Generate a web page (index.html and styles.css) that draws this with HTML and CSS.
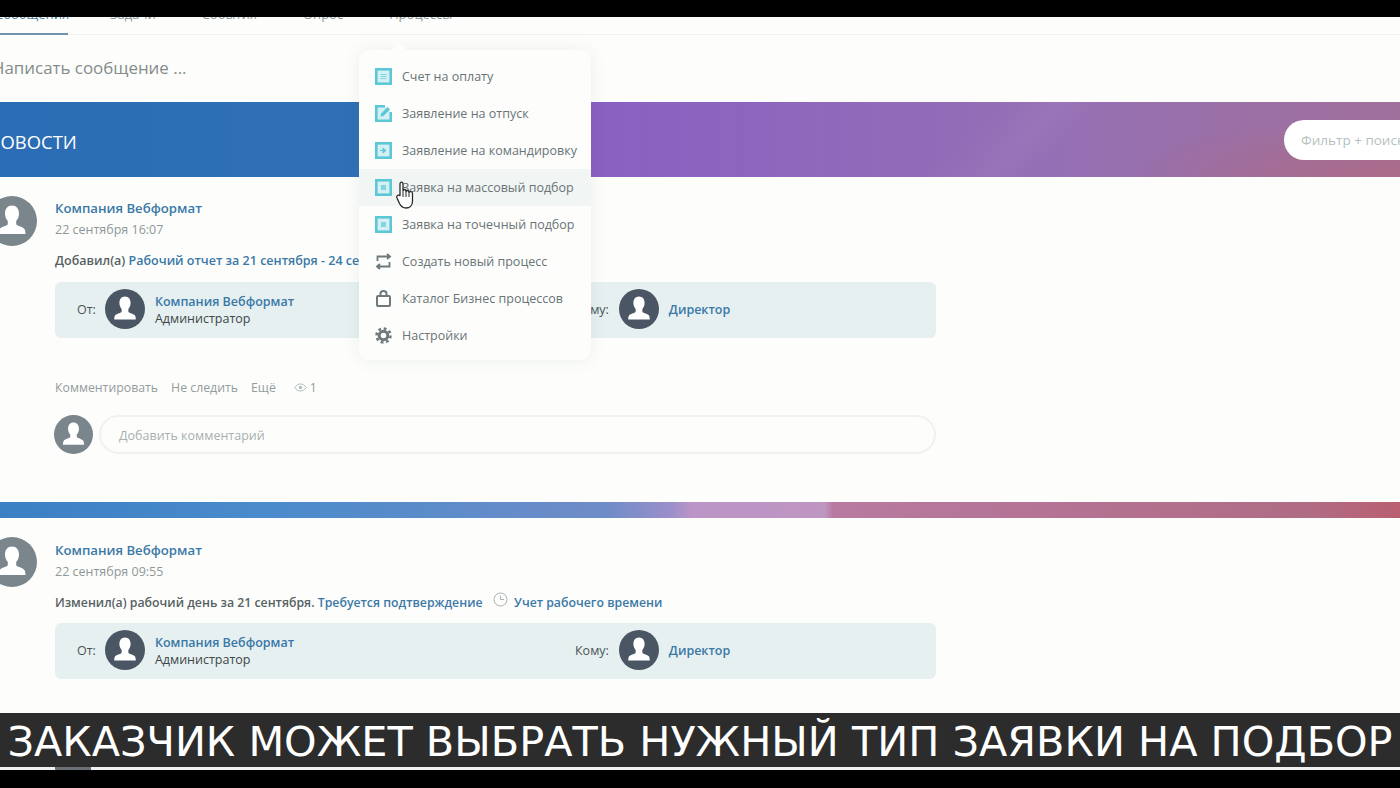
FILE: index.html
```html
<!DOCTYPE html>
<html lang="ru">
<head>
    <meta charset="UTF-8">
    <meta name="viewport" content="width=device-width, initial-scale=1.0">
    <title>Новости</title>
    <link rel="stylesheet" href="styles.css">
</head>
<body>

<svg class="defs" width="0" height="0">
    <symbol id="person" viewBox="0 0 50 50">
        <path d="M25 9.500c-4.500 0-7 3.500-7 8 0 3.200 1.200 5.500 2.800 7.500v3c0 1.800-5.300 2.200-7.800 4.500-1 1-1.500 3-1.500 5.500h27c0-2.500-.5-4.500-1.500-5.500-2.500-2.300-7.800-2.700-7.800-4.500v-3c1.600-2 2.800-4.300 2.800-7.500 0-4.500-2.500-8-7-8z" fill="#fff"/>
    </symbol>
    <symbol id="doc" viewBox="0 0 17 17">
        <rect x="1.300" y="1.300" width="14.400" height="14.400" fill="#d4f0f4" stroke="#5cc8d6" stroke-width="2.600"/>
        <rect x="6" y="6" width="5" height="5" fill="#7fd5e0"/>
    </symbol>
    <symbol id="doc-lines" viewBox="0 0 17 17">
        <rect x="1.300" y="1.300" width="14.400" height="14.400" fill="#d4f0f4" stroke="#5cc8d6" stroke-width="2.600"/>
        <path d="M5.500 6.500h6M5.500 8.500h6M5.500 10.500h6" stroke="#7fd5e0"/>
    </symbol>
    <symbol id="doc-arrow" viewBox="0 0 17 17">
        <rect x="1.300" y="1.300" width="14.400" height="14.400" fill="#d4f0f4" stroke="#5cc8d6" stroke-width="2.600"/>
        <path d="M5 8.500h4M8 6l3 2.500L8 11z" fill="#5cc8d6" stroke="#5cc8d6"/>
    </symbol>
</svg>

<div class="black-top"></div>

<main class="page">
    <nav class="tabs">
        <a class="tab active">Сообщения</a>
        <a class="tab">Задачи</a>
        <a class="tab">События</a>
        <a class="tab">Опрос</a>
        <a class="tab">Процессы</a>
    </nav>

    <div class="write">Написать сообщение ...</div>

    <div class="banner">
        <h1>НОВОСТИ</h1>
        <div class="filter">Фильтр + поиск</div>
    </div>

    <!-- First post -->
    <article class="post">
        <div class="avatar big"><svg><use href="#person"/></svg></div>
        <div class="post-body">
            <a class="author">Компания Вебформат</a>
            <div class="date">22 сентября 16:07</div>
            <p class="action">Добавил(а) <a>Рабочий отчет за 21 сентября - 24 сентября</a></p>
            <div class="route">
                <div class="party">
                    <span class="label">От:</span>
                    <div class="avatar dark"><svg><use href="#person"/></svg></div>
                    <div class="who"><a>Компания Вебформат</a><span>Администратор</span></div>
                </div>
                <div class="party">
                    <span class="label">Кому:</span>
                    <div class="avatar dark"><svg><use href="#person"/></svg></div>
                    <div class="who"><a>Директор</a></div>
                </div>
            </div>
            <div class="links">
                <span>Комментировать</span>
                <span>Не следить</span>
                <span>Ещё</span>
                <span class="views">
                    <svg width="13" height="9" viewBox="0 0 13 9"><path d="M.8 4.500C2.500 2 4.300 1 6.500 1s4 1 5.700 3.500C10.500 7 8.700 8 6.500 8S2.500 7 .8 4.500z" fill="none" stroke="#b4bcbc"/><circle cx="6.500" cy="4.500" r="1.700" fill="#b4bcbc"/></svg>
                    1
                </span>
            </div>
            <div class="comment">
                <div class="avatar small"><svg><use href="#person"/></svg></div>
                <div class="comment-input">Добавить комментарий</div>
            </div>
        </div>
    </article>

    <div class="band"></div>

    <!-- Second post -->
    <article class="post next">
        <div class="avatar big"><svg><use href="#person"/></svg></div>
        <div class="post-body">
            <a class="author">Компания Вебформат</a>
            <div class="date">22 сентября 09:55</div>
            <p class="action tight">
                Изменил(а) рабочий день за 21 сентября. <a>Требуется подтверждение</a>
                <svg class="clock" width="15" height="15" viewBox="0 0 15 15"><circle cx="7.500" cy="7.500" r="6.500" fill="none" stroke="#a9b4b4"/><path d="M7.500 3.500v4h3.500" fill="none" stroke="#a9b4b4"/></svg>
                <a>Учет рабочего времени</a>
            </p>
            <div class="route">
                <div class="party">
                    <span class="label">От:</span>
                    <div class="avatar dark"><svg><use href="#person"/></svg></div>
                    <div class="who"><a>Компания Вебформат</a><span>Администратор</span></div>
                </div>
                <div class="party">
                    <span class="label">Кому:</span>
                    <div class="avatar dark"><svg><use href="#person"/></svg></div>
                    <div class="who"><a>Директор</a></div>
                </div>
            </div>
        </div>
    </article>
</main>

<!-- Dropdown menu -->
<div class="menu">
    <div class="menu-item">
        <svg width="17" height="17"><use href="#doc-lines"/></svg>Счет на оплату
    </div>
    <div class="menu-item">
        <svg width="17" height="17" viewBox="0 0 17 17"><path d="M10 1.300H1.300v14.400h14.400V7" fill="#d4f0f4" stroke="#5cc8d6" stroke-width="2.600"/><path d="M5.500 11.500l.6-3L12.500 2l2.500 2.500-6.500 6.400z" fill="#5cc8d6"/></svg>Заявление на отпуск
    </div>
    <div class="menu-item">
        <svg width="17" height="17"><use href="#doc-arrow"/></svg>Заявление на командировку
    </div>
    <div class="menu-item hover">
        <svg width="17" height="17"><use href="#doc"/></svg>Заявка на массовый подбор
    </div>
    <div class="menu-item">
        <svg width="17" height="17"><use href="#doc"/></svg>Заявка на точечный подбор
    </div>
    <div class="menu-item">
        <svg width="17" height="17" viewBox="0 0 17 17" fill="none" stroke="#6f787a" stroke-width="1.800"><path d="M2.500 8V3.500H14M12 1l3 2.500L12 6"/><path d="M14.500 9v4.500H3M5 11l-3 2.500L5 16"/></svg>Создать новый процесс
    </div>
    <div class="menu-item">
        <svg width="17" height="17" viewBox="0 0 17 17" fill="none" stroke="#6f787a" stroke-width="2"><rect x="2" y="6" width="13" height="10" rx="1"/><path d="M5.500 6V3.500C5.500 2 6.800 1 8.500 1s3 1 3 2.500V6"/></svg>Каталог Бизнес процессов
    </div>
    <div class="menu-item">
        <svg width="17" height="17" viewBox="0 0 17 17"><circle cx="8.500" cy="8.500" r="4.300" fill="none" stroke="#6f787a" stroke-width="3"/><circle cx="8.500" cy="8.500" r="7" fill="none" stroke="#6f787a" stroke-width="2.500" stroke-dasharray="2.800 2.700"/></svg>Настройки
    </div>
</div>

<!-- Mouse pointer -->
<svg class="pointer" width="18" height="28" viewBox="0 0 18 28">
    <path d="M4 13V3c0-2.500 3-2.500 3 0v7c0-2 3-2 3 0v1c0-2 3-2 3 0v1c0-2 3.500-2 3.500 .5V20c0 4-2.500 7-6.500 7-3.500 0-5-1.500-6.500-4.500L1 17c-1-2.500 2-4 3-2z" fill="#fff" stroke="#26292c" stroke-width="1.300"/>
    <path d="M7 10v6M10 11v5M13 12v4" stroke="#26292c" fill="none"/>
</svg>

<div class="caption">ЗАКАЗЧИК МОЖЕТ ВЫБРАТЬ НУЖНЫЙ ТИП ЗАЯВКИ НА ПОДБОР</div>
<div class="peek"><span></span></div>
<div class="black-bottom"></div>

</body>
</html>
```

FILE: styles.css
```css
body {
    font-family: "Open Sans", "Liberation Sans", sans-serif;
    font-size: 13px;
    margin: 0;
    height: 788px;
    overflow: hidden;
    background-color: #fdfefb;
    color: #4b5557;
}
a {
    color: #3a78a8;
}
.defs {
    position: absolute;
}
.black-top {
    height: 17px;
    background-color: #000;
    position: relative;
    z-index: 2;
}
.black-bottom {
    height: 18px;
    background-color: #000;
}
.page {
    height: 696px;
    width: 1520px;
    margin-left: -13px;
    overflow: hidden;
}
.tabs {
    display: flex;
    gap: 46px;
    margin-top: -16px;
    height: 34px;
    border-bottom: 1px solid #edf1f0;
    box-sizing: border-box;
}
.tab {
    color: #8b9699;
    line-height: 26px;
}
.tab.active {
    width: 81px;
    padding-left: 8px;
    margin-right: -4px;
    border-bottom: 2px solid #6f94ad;
    height: 34px;
    box-sizing: border-box;
    color: #4e7f9f;
}
.write {
    font-size: 16.900px;
    color: #858c8c;
    padding-left: 5px;
    line-height: 20px;
    margin-top: 23px;
    margin-bottom: 24px;
}
.banner {
    height: 75px;
    display: flex;
    align-items: center;
    justify-content: space-between;
    background: radial-gradient(ellipse 260px 60px at 1400px 75px, rgba(180, 105, 125, 0.6), transparent), linear-gradient(135deg, transparent 715px, rgba(255,255,255,0.04) 760px, transparent 790px), linear-gradient(90deg, #2a6db4 0, #2f6fb5 370px, #8a60c2 610px, #9570b4 1080px, #9b70a6 1250px, #a0709c 1420px);
}
.banner h1 {
    margin: 3px 0 0;
    font-size: 18.400px;
    font-weight: 400;
    color: #fff;
}
.filter {
    width: 210px;
    height: 40px;
    line-height: 40px;
    background-color: #fff;
    border-radius: 20px;
    padding-left: 17px;
    box-sizing: border-box;
    color: #b4bfc0;
    font-size: 13.500px;
    margin-right: 13px;
}
.post {
    display: flex;
    gap: 18px;
    padding-top: 19px;
}
.post-body {
    width: 881px;
    padding-top: 2px;
}
.post.next .post-body {
    padding-top: 3px;
}
.post.next .route {
    margin-top: 10px;
}
.avatar {
    width: 40px;
    height: 40px;
    border-radius: 50%;
    background-color: #7a868c;
    flex-shrink: 0;
    overflow: hidden;
}
.avatar svg {
    width: 100%;
    height: 100%;
    display: block;
}
.avatar.big {
    width: 50px;
    height: 50px;
}
.avatar.small {
    width: 39px;
    height: 39px;
}
.avatar.dark {
    background-color: #4b5665;
}
.author {
    display: block;
    font-weight: 600;
    font-size: 13.200px;
    line-height: 21px;
}
.date {
    line-height: 21px;
    color: #8e979a;
    font-size: 12.500px;
}
.action {
    margin: 10px 0 0;
    line-height: 21px;
    font-size: 12.500px;
    font-weight: 600;
    color: #566164;
}
.action.tight {
    font-size: 12.300px;
}
.clock {
    margin: 0 3px 0 7px;
    vertical-align: 0;
}
.route {
    display: grid;
    grid-template-columns: 1fr 361px;
    height: 56px;
    margin-top: 11px;
    background-color: #e6f0f0;
    border-radius: 6px;
    padding-left: 22px;
    box-sizing: border-box;
}
.party {
    display: flex;
    align-items: center;
    padding-bottom: 2px;
}
.label {
    color: #4b5557;
    font-size: 12.500px;
    margin-right: 9px;
}
.party + .party .label {
    margin-right: 10px;
}
.who {
    display: flex;
    flex-direction: column;
    margin-left: 10px;
    margin-top: 2px;
    line-height: 17px;
    font-size: 12.500px;
}
.who a {
    font-weight: 600;
    margin-top: -1px;
}
.who span {
    color: #3d4648;
}
.links {
    display: flex;
    gap: 13px;
    margin-top: 40px;
    line-height: 20px;
    font-size: 12.300px;
    color: #939c9e;
}
.views {
    margin-left: 5px;
    letter-spacing: -0.3px;
}
.comment {
    display: flex;
    gap: 6px;
    margin: 17px 0 48px -1px;
}
.comment-input {
    flex: 1;
    height: 39px;
    line-height: 38px;
    box-sizing: border-box;
    border: 2px solid #eff2ef;
    border-radius: 20px;
    padding-left: 18px;
    font-size: 12.500px;
    color: #a7afb0;
}
.band {
    height: 16px;
    background: linear-gradient(90deg, #3b7fc4 0, #4a8bcb 280px, #6f8cc8 620px, #9c8fca 685px, #bb95c6 705px, #bf95c2 838px, #b87aa0 846px, #b57598 1000px, #b06c84 1320px, #bb5e70 1420px);
}
.menu {
    position: absolute;
    left: 359px;
    top: 50px;
    width: 232px;
    height: 310px;
    padding: 8px 0;
    box-sizing: border-box;
    background-color: #fdfefc;
    border-radius: 10px;
    box-shadow: 0 0 16px rgba(90, 110, 120, 0.10);
}
.menu::before {
    content: "";
    position: absolute;
    left: 33px;
    top: -5px;
    width: 14px;
    height: 14px;
    background-color: #fdfefc;
    transform: rotate(45deg);
}
.menu-item {
    position: relative;
    display: flex;
    align-items: center;
    gap: 10px;
    height: 37px;
    padding-left: 16px;
    color: #6a7376;
    font-size: 12.500px;
}
.menu-item.hover {
    background-color: #f1f5f4;
}
.pointer {
    position: absolute;
    left: 396px;
    top: 181px;
}
.caption {
    height: 54px;
    line-height: 59px;
    background-color: #2c2c2c;
    color: #fff;
    font-family: "DejaVu Sans", sans-serif;
    font-size: 41.400px;
    text-align: center;
    white-space: nowrap;
}
.peek {
    height: 3px;
    background-color: #eef1f0;
    padding-left: 55px;
}
.peek span {
    display: block;
    width: 36px;
    height: 3px;
    background-color: #6a7076;
}
```
